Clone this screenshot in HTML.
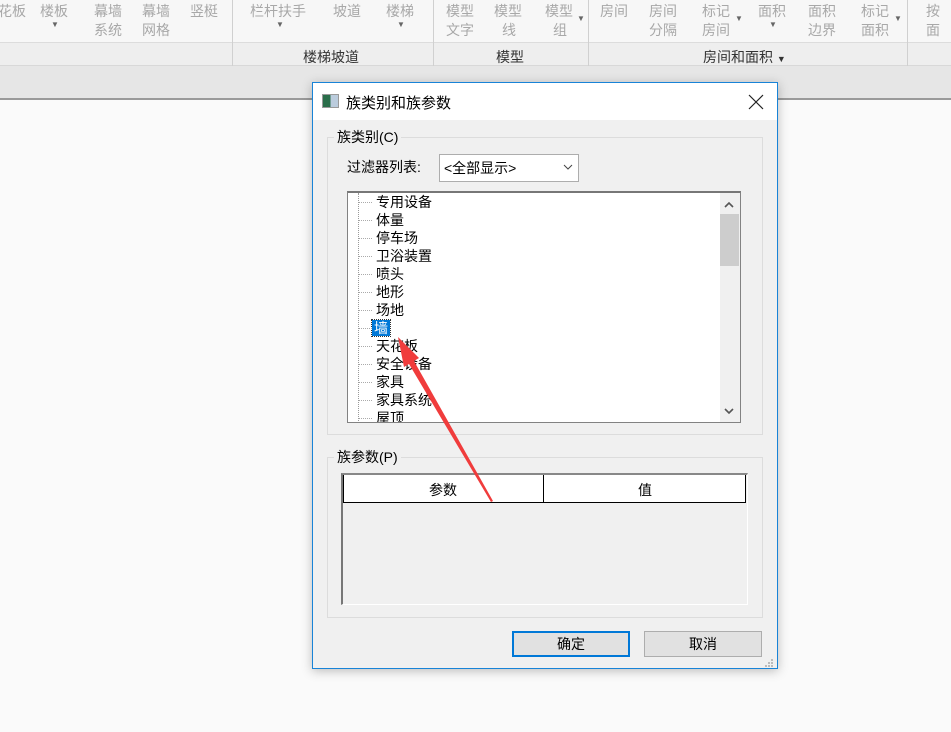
<!DOCTYPE html>
<html><head><meta charset="utf-8"><style>
*{margin:0;padding:0;box-sizing:border-box}
body{width:951px;height:732px;position:relative;overflow:hidden;background:#fafafa;font-family:"Liberation Sans","Noto Sans CJK SC",sans-serif;font-size:14px;color:#000}
.a{position:absolute;white-space:nowrap}
.g{color:#a8a8a8;font-size:14px}
.tri{font-size:8px;color:#666}
</style></head><body>
<!-- ribbon -->
<div class="a" style="left:0;top:0;width:951px;height:43px;background:#f7f7f7;border-bottom:1px solid #dcdcdc"></div>
<div class="a" style="left:0;top:43px;width:951px;height:23px;background:#eeeeee;border-bottom:1px solid #d8d8d8"></div>
<div class="a" style="left:0;top:66px;width:951px;height:34px;background:#e6e6e6;border-bottom:2px solid #9a9a9a"></div>
<div class="a" style="left:232px;top:0;width:1px;height:66px;background:#d0d0d0"></div>
<div class="a" style="left:433px;top:0;width:1px;height:66px;background:#d0d0d0"></div>
<div class="a" style="left:588px;top:0;width:1px;height:66px;background:#d0d0d0"></div>
<div class="a" style="left:907px;top:0;width:1px;height:66px;background:#d0d0d0"></div>
<div class="a g" style="left:-2px;top:1px">花板</div>
<div class="a g" style="left:40px;top:1px">楼板</div><div class="a tri" style="left:51px;top:20px">▼</div>
<div class="a g" style="left:94px;top:1px">幕墙</div><div class="a g" style="left:94px;top:20px">系统</div>
<div class="a g" style="left:142px;top:1px">幕墙</div><div class="a g" style="left:142px;top:20px">网格</div>
<div class="a g" style="left:190px;top:1px">竖梃</div>
<div class="a g" style="left:250px;top:1px">栏杆扶手</div><div class="a tri" style="left:276px;top:20px">▼</div>
<div class="a g" style="left:333px;top:1px">坡道</div>
<div class="a g" style="left:386px;top:1px">楼梯</div><div class="a tri" style="left:397px;top:20px">▼</div>
<div class="a g" style="left:446px;top:1px">模型</div><div class="a g" style="left:446px;top:20px">文字</div>
<div class="a g" style="left:494px;top:1px">模型</div><div class="a g" style="left:502px;top:20px">线</div>
<div class="a g" style="left:545px;top:1px">模型</div><div class="a g" style="left:553px;top:20px">组</div><div class="a tri" style="left:577px;top:14px">▼</div>
<div class="a g" style="left:600px;top:1px">房间</div>
<div class="a g" style="left:649px;top:1px">房间</div><div class="a g" style="left:649px;top:20px">分隔</div>
<div class="a g" style="left:702px;top:1px">标记</div><div class="a g" style="left:702px;top:20px">房间</div><div class="a tri" style="left:735px;top:14px">▼</div>
<div class="a g" style="left:758px;top:1px">面积</div><div class="a tri" style="left:769px;top:20px">▼</div>
<div class="a g" style="left:808px;top:1px">面积</div><div class="a g" style="left:808px;top:20px">边界</div>
<div class="a g" style="left:861px;top:1px">标记</div><div class="a g" style="left:861px;top:20px">面积</div><div class="a tri" style="left:894px;top:14px">▼</div>
<div class="a g" style="left:926px;top:1px">按</div><div class="a g" style="left:926px;top:20px">面</div>
<div class="a" style="left:303px;top:47px;color:#333">楼梯坡道</div>
<div class="a" style="left:496px;top:47px;color:#333">模型</div>
<div class="a" style="left:703px;top:47px;color:#333">房间和面积 <span style="font-size:9px">▼</span></div>

<!-- dialog -->
<div class="a" style="left:312px;top:82px;width:466px;height:587px;background:#f0f0f0;border:1px solid #1883d7;box-shadow:0 2px 10px rgba(0,0,0,.25)"></div>
<div class="a" style="left:313px;top:83px;width:464px;height:37px;background:#fff"></div>
<div class="a" style="left:322px;top:94px;width:17px;height:14px;border:1px solid #999;background:linear-gradient(90deg,#2a6e4a 0 50%,#bcd 50%)"></div>
<div class="a" style="left:346px;top:92px;font-size:15px">族类别和族参数</div>

<div class="a" style="left:327px;top:137px;width:436px;height:298px;border:1px solid #dcdcdc"></div>
<div class="a" style="left:334px;top:127px;background:#f0f0f0;padding:0 3px">族类别(C)</div>
<div class="a" style="left:347px;top:157px">过滤器列表:</div>
<div class="a" style="left:439px;top:154px;width:140px;height:28px;border:1px solid #adadad;background:#fff"></div>
<div class="a" style="left:444px;top:158px">&lt;全部显示&gt;</div>

<div class="a" style="left:347px;top:191px;width:394px;height:232px;border:1px solid #828282;border-top:2px solid #777;background:#fff;overflow:hidden">
 <div class="a" style="left:10px;top:0;width:0;height:232px;border-left:1px dotted #999"></div>
 <div class="a" style="left:372px;top:0;width:20px;height:230px;background:#f0f0f0"></div>
 <div class="a" style="left:372px;top:21px;width:19px;height:52px;background:#cdcdcd"></div>
 <div class="a" style="left:28px;top:0;line-height:18px">专用设备<br>体量<br>停车场<br>卫浴装置<br>喷头<br>地形<br>场地<br><span style="background:#0078d7;color:#fff;outline:1px dotted #333;margin-left:-4px;padding:0 2px">墙</span><br>天花板<br>安全设备<br>家具<br>家具系统<br>屋顶</div>
 <div class="a" style="left:11px;top:0;width:14px;height:232px;background:repeating-linear-gradient(180deg,transparent 0 9px,#aaa 9px 10px,transparent 10px 18px);-webkit-mask:repeating-linear-gradient(90deg,#000 0 1px,transparent 1px 2px)"></div>
</div>

<div class="a" style="left:327px;top:457px;width:436px;height:161px;border:1px solid #dcdcdc"></div>
<div class="a" style="left:334px;top:447px;background:#f0f0f0;padding:0 3px">族参数(P)</div>
<div class="a" style="left:341px;top:473px;width:407px;height:132px;border-left:2px solid #777;border-top:2px solid #888;border-right:1px solid #fff;border-bottom:1px solid #fff"></div>
<div class="a" style="left:343px;top:475px;width:403px;height:28px;border:1px solid #000;border-top:none;background:#fff"></div>
<div class="a" style="left:543px;top:475px;width:1px;height:28px;background:#000"></div>
<div class="a" style="left:429px;top:480px">参数</div>
<div class="a" style="left:638px;top:480px">值</div>

<div class="a" style="left:512px;top:631px;width:118px;height:26px;border:2px solid #0078d7;background:#e1e1e1;text-align:center;line-height:22px">确定</div>
<div class="a" style="left:644px;top:631px;width:118px;height:26px;border:1px solid #adadad;background:#e1e1e1;text-align:center;line-height:24px">取消</div>

<svg class="a" style="left:0;top:0" width="951" height="732">
 <path d="M749 95 L763 109 M763 95 L749 109" stroke="#222" stroke-width="1.2" fill="none"/>
 <path d="M564 165 L568 169 L572 165" stroke="#444" stroke-width="1" fill="none"/>
 <path d="M725 207 L729 203 L733 207" stroke="#555" stroke-width="1.6" fill="none"/>
 <path d="M725 409 L729 413 L733 409" stroke="#555" stroke-width="1.6" fill="none"/>
 <polygon points="398,337 419,358 414,361 493,501 491,502 409,364 404,367" fill="#f03c3c"/>
 <g fill="#bbb"><rect x="771" y="662" width="2" height="2"/><rect x="768" y="665" width="2" height="2"/><rect x="771" y="665" width="2" height="2"/><rect x="765" y="665" width="2" height="2"/><rect x="771" y="659" width="2" height="2"/><rect x="768" y="662" width="2" height="2"/></g>
</svg>
</body></html>
